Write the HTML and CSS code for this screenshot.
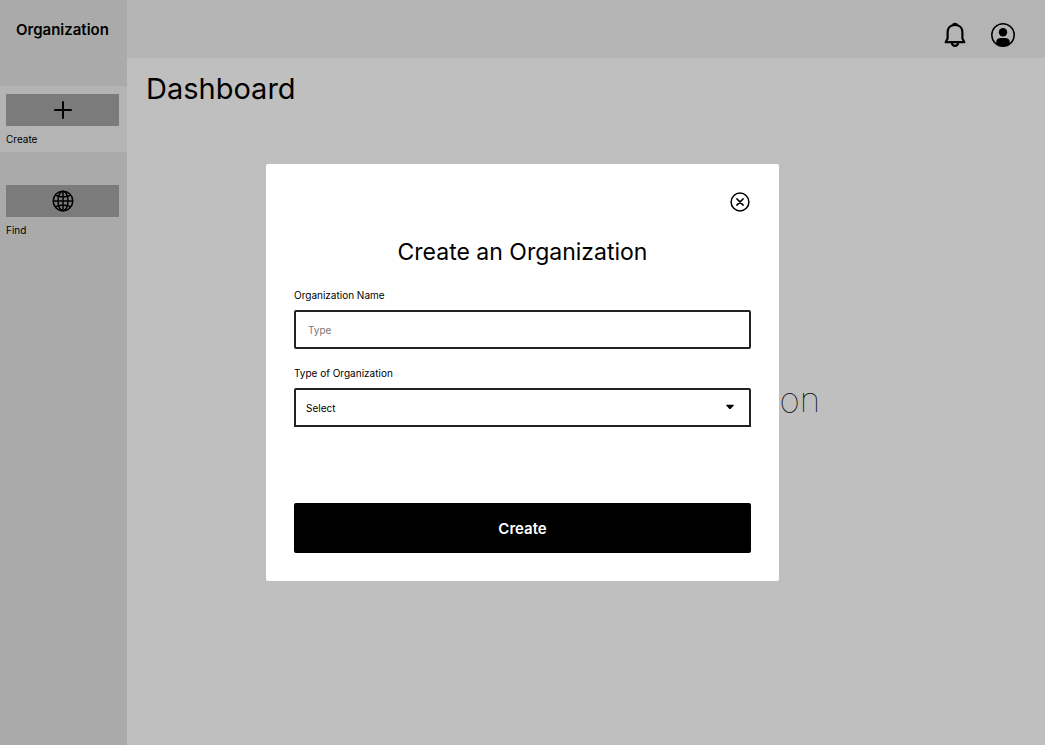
FILE: index.html
```html
<!DOCTYPE html>
<html lang="en">
<head>
<meta charset="utf-8">
<meta name="viewport" content="width=device-width, initial-scale=1">
<title>Dashboard</title>
<link rel="stylesheet" href="styles.css">
</head>
<body>
<div class="app">
  <aside class="sidebar">
    <h2 class="sidebar-title">Organization</h2>
    <nav class="sidebar-nav">
      <div class="nav-item active">
        <button class="nav-button" type="button" aria-labelledby="nav-create">
          <svg width="20" height="20" viewBox="0 0 20 20" fill="none" stroke="currentColor" stroke-width="2" stroke-linecap="round"><path d="M10 2v16M2 10h16"/></svg>
        </button>
        <span class="nav-label" id="nav-create">Create</span>
      </div>
      <div class="nav-item">
        <button class="nav-button" type="button" aria-labelledby="nav-find">
          <svg width="22" height="22" viewBox="0 0 22 22" fill="none" stroke="currentColor" stroke-width="1.5"><circle cx="11" cy="11" r="9.8"/><ellipse cx="11" cy="11" rx="5" ry="9.8"/><path d="M11 1.2v19.6M1.2 11h19.6M3.5 5.2Q11 8.6 18.5 5.2M3.5 16.8Q11 13.4 18.5 16.8"/></svg>
        </button>
        <span class="nav-label" id="nav-find">Find</span>
      </div>
    </nav>
  </aside>
  <div class="content">
    <header class="topbar">
      <button class="icon-button" type="button" aria-label="Notifications">
        <svg width="24" height="26" viewBox="0 0 24 26" fill="none" stroke="currentColor" stroke-width="2.2" stroke-linejoin="round"><path d="M4.6 16.6V10.2C4.6 6 7.4 3 12 3s7.4 3 7.4 7.2v6.4L21.3 20.2H2.7Z"/><path d="M10.3 3a1.7 1.2 0 0 1 3.4 0" fill="currentColor"/><path d="M8.8 20.6a3.2 3.2 0 0 0 6.4 0"/></svg>
      </button>
      <button class="icon-button" type="button" aria-label="Account">
        <svg width="24" height="26" viewBox="0 0 24 26"><circle cx="12" cy="13" r="11.2" fill="none" stroke="currentColor" stroke-width="1.5"/><circle cx="12" cy="10.2" r="4.2" fill="currentColor"/><path d="M5.2 21.5V20.2c0-3 2-4.3 4.6-4.3h4.4c2.6 0 4.6 1.3 4.6 4.3v1.3Q16 24.5 12 24.5T5.2 21.5Z" fill="currentColor"/></svg>
      </button>
    </header>
    <main class="main">
      <h1 class="page-title">Dashboard</h1>
      <p class="empty-text">Create or find an Organization</p>
    </main>
  </div>
</div>
<div class="overlay">
  <form class="modal" role="dialog" aria-labelledby="modal-title">
    <button class="close" type="button" aria-label="Close">
      <svg width="20" height="20" viewBox="0 0 20 20" fill="none" stroke="currentColor" stroke-width="1.5" stroke-linecap="round"><circle cx="10" cy="10" r="8.9"/><path d="M6.9 6.9l6.2 6.2M13.1 6.9l-6.2 6.2"/></svg>
    </button>
    <h2 class="modal-title" id="modal-title">Create an Organization</h2>
    <div class="field">
      <label for="org-name">Organization Name</label>
      <input class="control" id="org-name" type="text" placeholder="Type">
    </div>
    <div class="field">
      <label for="org-type">Type of Organization</label>
      <div class="select-wrap">
        <select class="control select" id="org-type"><option>Select</option></select>
        <svg class="caret" width="8" height="6" viewBox="0 0 8 6"><path d="M0.6 0.8h6.8q.6 0 .4.6L4.8 4.8q-.8.6-1.6 0L.2 1.4q-.2-.6.4-.6Z"/></svg>
      </div>
    </div>
    <button class="submit" type="submit">Create</button>
  </form>
</div>
</body>
</html>
```
FILE: styles.css
```css
* {
  box-sizing: border-box;
}

body {
  margin: 0;
  font-family: Inter, "Liberation Sans", sans-serif;
  color: #000;
  background: #fff;
}

h1, h2, p {
  margin: 0;
}

button, input, select {
  font: inherit;
  color: inherit;
}

svg {
  display: block;
}

.app {
  display: flex;
  min-height: 100vh;
}

.sidebar {
  flex: 0 0 127px;
  background: #e3e3e3;
}

.sidebar-title {
  padding: 20px 0 46px 16px;
  font-size: 15px;
  line-height: 20px;
  font-weight: 600;
}

.sidebar-nav {
  display: grid;
  gap: 25px;
}

.nav-item {
  display: grid;
  gap: 6px;
  padding: 8px 8px 6px 6px;
}

.nav-item.active {
  background: #f0f0f0;
}

.nav-button {
  display: flex;
  align-items: center;
  justify-content: center;
  height: 32px;
  padding: 0;
  border: 0;
  background: #a5a5a5;
}

.nav-label {
  font-size: 10px;
  line-height: 14px;
}

.content {
  flex: 1;
  display: flex;
  flex-direction: column;
}

.topbar {
  display: flex;
  align-items: center;
  justify-content: flex-end;
  gap: 24px;
  height: 58px;
  padding: 12px 30px 0 0;
  background: #f0f0f0;
}

.icon-button {
  padding: 0;
  border: 0;
  background: none;
}

.main {
  flex: 1;
  padding: 12px 19px;
}

.page-title {
  font-size: 29px;
  line-height: 38px;
  font-weight: 400;
}

.empty-text {
  margin-top: 267px;
  font-size: 35px;
  line-height: 48px;
  font-weight: 100;
  text-align: center;
}

.overlay {
  position: fixed;
  inset: 0;
  display: flex;
  align-items: center;
  justify-content: center;
  background: rgba(0, 0, 0, 0.25);
}

.modal {
  display: flex;
  flex-direction: column;
  width: 100%;
  max-width: 513px;
  padding: 28px;
  border-radius: 2px;
  background: #fff;
}

.close {
  align-self: flex-end;
  margin-right: 1px;
  padding: 0;
  border: 0;
  background: none;
}

.modal-title {
  margin: 24px 0 20px;
  font-size: 23px;
  line-height: 32px;
  font-weight: 400;
  text-align: center;
}

.field {
  display: grid;
  gap: 8px;
  margin-bottom: 17px;
  font-size: 10px;
}

.field label {
  line-height: 14px;
}

.control {
  display: block;
  width: 100%;
  height: 39px;
  padding: 0 12px;
  border: 2px solid #222;
  border-radius: 2px;
  background: #fff;
}

.control::placeholder {
  color: #777;
  opacity: 1;
}

.select-wrap {
  position: relative;
}

.select {
  appearance: none;
  padding: 0 10px;
  border-radius: 2px 2px 0 0;
}

.caret {
  position: absolute;
  top: 16px;
  right: 17px;
  pointer-events: none;
}

.submit {
  height: 50px;
  margin-top: 59px;
  padding: 0;
  border: 0;
  border-radius: 2px;
  background: #000;
  color: #fff;
  font-size: 15px;
  font-weight: 600;
}
```
